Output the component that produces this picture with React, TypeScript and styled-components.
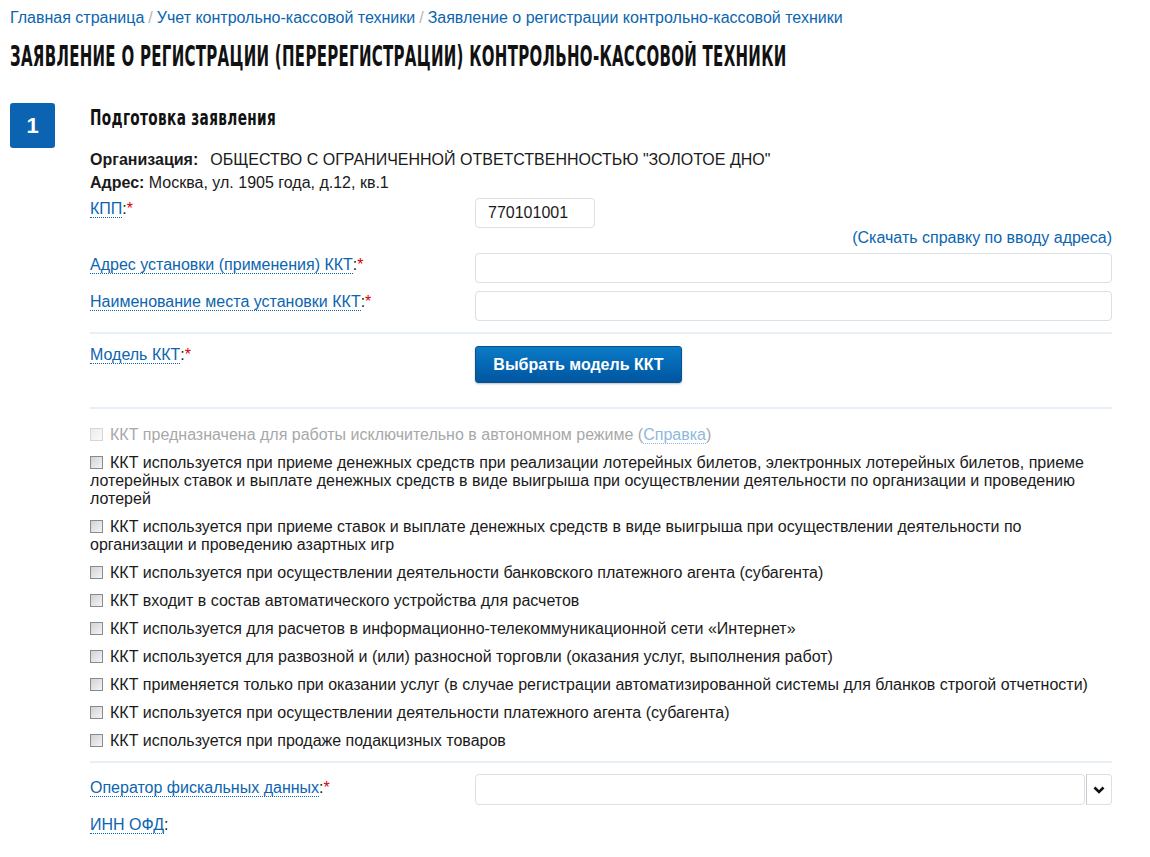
import { FC } from "react";
import styled, { createGlobalStyle } from "styled-components";

const GlobalStyle = createGlobalStyle`
  body {
    margin: 0;
    background: #fff;
    font-family: "Liberation Sans", Arial, sans-serif;
    font-size: 16px;
    color: #1a1a1a;
  }
`;

const checkboxItems = [
  "ККТ используется при приеме денежных средств при реализации лотерейных билетов, электронных лотерейных билетов, приеме лотерейных ставок и выплате денежных средств в виде выигрыша при осуществлении деятельности по организации и проведению лотерей",
  "ККТ используется при приеме ставок и выплате денежных средств в виде выигрыша при осуществлении деятельности по организации и проведению азартных игр",
  "ККТ используется при осуществлении деятельности банковского платежного агента (субагента)",
  "ККТ входит в состав автоматического устройства для расчетов",
  "ККТ используется для расчетов в информационно-телекоммуникационной сети «Интернет»",
  "ККТ используется для развозной и (или) разносной торговли (оказания услуг, выполнения работ)",
  "ККТ применяется только при оказании услуг (в случае регистрации автоматизированной системы для бланков строгой отчетности)",
  "ККТ используется при осуществлении деятельности платежного агента (субагента)",
  "ККТ используется при продаже подакцизных товаров",
];

const App: FC = () => {
  return (
    <Page>
      <GlobalStyle />
      <Breadcrumbs>
        <Crumb>Главная страница</Crumb>
        <Sep>/</Sep>
        <Crumb>Учет контрольно-кассовой техники</Crumb>
        <Sep>/</Sep>
        <Crumb>Заявление о регистрации контрольно-кассовой техники</Crumb>
      </Breadcrumbs>
      <Title>
        <Condensed $scale={0.595}>
          ЗАЯВЛЕНИЕ О РЕГИСТРАЦИИ (ПЕРЕРЕГИСТРАЦИИ) КОНТРОЛЬНО-КАССОВОЙ ТЕХНИКИ
        </Condensed>
      </Title>

      <Step>
        <StepNumber>1</StepNumber>
        <StepBody>
          <StepTitle>
            <Condensed $scale={0.69}>Подготовка заявления</Condensed>
          </StepTitle>

          <Info>
            <InfoLine>
              <b>Организация:</b>
              <OrgValue>
                ОБЩЕСТВО С ОГРАНИЧЕННОЙ ОТВЕТСТВЕННОСТЬЮ "ЗОЛОТОЕ ДНО"
              </OrgValue>
            </InfoLine>
            <InfoLine>
              <b>Адрес:</b> Москва, ул. 1905 года, д.12, кв.1
            </InfoLine>
          </Info>

          <FormRow $mt={4}>
            <Label $pt={2}>
              <Term>КПП</Term>:<Req>*</Req>
            </Label>
            <Field>
              <Input $width={120} defaultValue="770101001" />
            </Field>
          </FormRow>
          <HelpLink>(Скачать справку по вводу адреса)</HelpLink>

          <FormRow $mt={6}>
            <Label $pt={3}>
              <Term>Адрес установки (применения) ККТ</Term>:<Req>*</Req>
            </Label>
            <Field>
              <Input />
            </Field>
          </FormRow>
          <FormRow $mt={8}>
            <Label $pt={2}>
              <Term>Наименование места установки ККТ</Term>:<Req>*</Req>
            </Label>
            <Field>
              <Input />
            </Field>
          </FormRow>

          <Divider $mt={11} $mb={12} />

          <FormRow>
            <Label $pt={0}>
              <Term>Модель ККТ</Term>:<Req>*</Req>
            </Label>
            <Field>
              <BlueButton>Выбрать модель ККТ</BlueButton>
            </Field>
          </FormRow>

          <Divider $mt={24} $mb={17} />

          <Checks>
            <CheckRow $disabled>
              <Box $disabled />
              ККТ предназначена для работы исключительно в автономном режиме (
              <HelpTerm>Справка</HelpTerm>)
            </CheckRow>
            {checkboxItems.map((text) => (
              <CheckRow key={text}>
                <Box />
                {text}
              </CheckRow>
            ))}
          </Checks>

          <Divider $mt={11} $mb={11} />

          <FormRow>
            <Label $pt={5}>
              <Term>Оператор фискальных данных</Term>:<Req>*</Req>
            </Label>
            <Field>
              <SelectWrap>
                <SelectInput />
                <SelectToggle>
                  <svg width="12" height="8" viewBox="0 0 12 8">
                    <path
                      d="M1.5 1.5 L6 6 L10.5 1.5"
                      fill="none"
                      stroke="#111"
                      strokeWidth="2.6"
                    />
                  </svg>
                </SelectToggle>
              </SelectWrap>
            </Field>
          </FormRow>
          <FormRow $mt={11}>
            <Label $pt={0}>
              <Term>ИНН ОФД</Term>:
            </Label>
          </FormRow>
        </StepBody>
      </Step>
    </Page>
  );
};

export default App;

const Page = styled.div`
  padding: 9px 10px 20px;
  overflow: hidden;
`;

const Breadcrumbs = styled.div`
  line-height: 18px;
`;
const Crumb = styled.span`
  color: #0b65b0;
`;
const Sep = styled.span`
  color: #b5b5b5;
  margin: 0 4px;
`;

const Title = styled.h1`
  margin: 14px 0 0;
  height: 32px;
  line-height: 32px;
  font-size: 28px;
  white-space: nowrap;
  overflow: hidden;
  color: #111;
`;

const Condensed = styled.span<{ $scale: number }>`
  display: inline-block;
  font-family: "Liberation Sans Narrow", "DejaVu Sans Condensed", sans-serif;
  font-weight: bold;
  transform: scaleX(${({ $scale }) => $scale});
  transform-origin: left center;
  letter-spacing: 0.5px;
`;

const Step = styled.div`
  display: flex;
  gap: 35px;
  margin-top: 30px;
`;

const StepNumber = styled.div`
  flex: none;
  width: 45px;
  height: 45px;
  border-radius: 3px;
  background: #0c63b1;
  color: #fff;
  font-weight: bold;
  font-size: 22px;
  display: flex;
  align-items: center;
  justify-content: center;
`;

const StepBody = styled.div`
  width: 1022px;
`;

const StepTitle = styled.h2`
  margin: 2px 0 0;
  line-height: 26px;
  height: 26px;
  font-size: 22px;
  white-space: nowrap;
  overflow: hidden;
  color: #111;
`;

const Info = styled.div`
  margin-top: 17px;
`;
const InfoLine = styled.div`
  line-height: 23px;
`;
const OrgValue = styled.span`
  margin-left: 12px;
`;

const FormRow = styled.div<{ $mt?: number }>`
  display: grid;
  grid-template-columns: 385px 1fr;
  align-items: start;
  margin-top: ${({ $mt }) => $mt ?? 0}px;
`;

const Label = styled.div<{ $pt: number }>`
  padding-top: ${({ $pt }) => $pt}px;
  line-height: 18px;
`;

const Term = styled.span`
  color: #0b65b0;
  border-bottom: 1px dotted #0b65b0;
`;

const Req = styled.span`
  color: #d40000;
`;

const Field = styled.div`
  display: flex;
`;

const Input = styled.input<{ $width?: number }>`
  box-sizing: border-box;
  width: ${({ $width }) => ($width ? `${$width}px` : "100%")};
  height: 30px;
  border: 1px solid #dcdfe3;
  border-radius: 4px;
  padding: 0 12px;
  font-family: "Liberation Sans", Arial, sans-serif;
  font-size: 16px;
  color: #1a1a1a;
  outline: none;
`;

const HelpLink = styled.div`
  text-align: right;
  line-height: 18px;
  color: #0b65b0;
  margin-top: 1px;
`;

const Divider = styled.div<{ $mt: number; $mb: number }>`
  height: 2px;
  background: #e8eff6;
  margin: ${({ $mt, $mb }) => `${$mt}px 0 ${$mb}px`};
`;

const BlueButton = styled.button`
  width: 207px;
  height: 37px;
  border: 1px solid #0a4f8e;
  border-radius: 3px;
  background: linear-gradient(#0a7bc7, #0055a0);
  color: #fff;
  font-family: "Liberation Sans", Arial, sans-serif;
  font-weight: bold;
  font-size: 16px;
  box-shadow: 0 1px 2px rgba(0, 0, 0, 0.25);
`;

const Checks = styled.div`
  display: flex;
  flex-direction: column;
  gap: 10px;
`;

const CheckRow = styled.div<{ $disabled?: boolean }>`
  line-height: 18px;
  color: ${({ $disabled }) => ($disabled ? "#a8a8a8" : "#1a1a1a")};
`;

const Box = styled.span<{ $disabled?: boolean }>`
  display: inline-block;
  box-sizing: border-box;
  width: 13px;
  height: 13px;
  margin-right: 7px;
  vertical-align: -1px;
  border: 1px solid ${({ $disabled }) => ($disabled ? "#d6d6d6" : "#8a8a8a")};
  background: ${({ $disabled }) =>
    $disabled
      ? "linear-gradient(135deg, #ececec, #fafafa)"
      : "linear-gradient(135deg, #cfd2d6, #f4f4f4)"};
`;

const HelpTerm = styled.span`
  color: #8fb8dd;
  border-bottom: 1px dotted #8fb8dd;
`;

const SelectWrap = styled.div`
  display: flex;
  width: 100%;
  gap: 1px;
`;

const SelectInput = styled.div`
  flex: 1;
  height: 31px;
  box-sizing: border-box;
  border: 1px solid #dcdfe3;
  border-radius: 4px;
`;

const SelectToggle = styled.div`
  width: 26px;
  height: 31px;
  box-sizing: border-box;
  border: 1px solid #dcdfe3;
  border-left: 1px solid #c9ccd0;
  border-radius: 0 4px 4px 0;
  display: flex;
  align-items: center;
  justify-content: center;
`;
